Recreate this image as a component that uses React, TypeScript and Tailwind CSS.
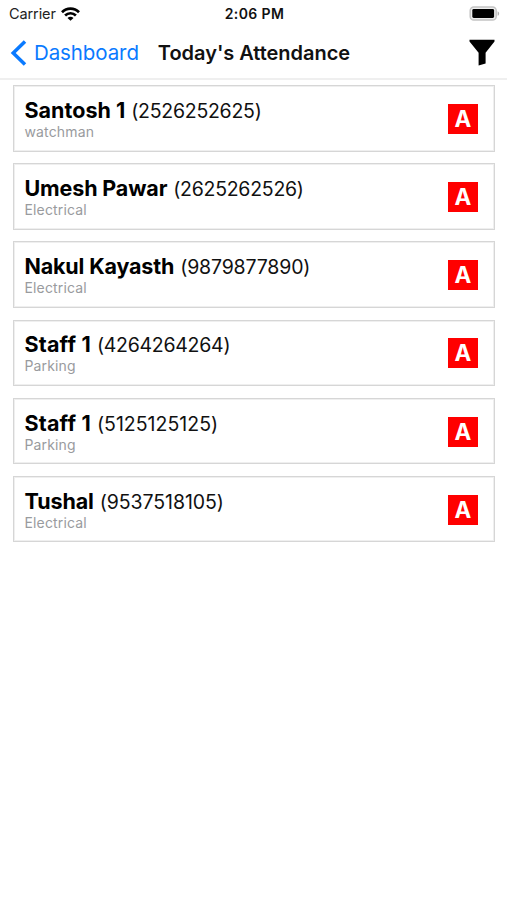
interface Staff {
  name: string
  phone: string
  role: string
  nameClass: string
  phoneClass: string
}

const staff: Staff[] = [
  { name: 'Santosh 1',     phone: '2526252625', role: 'watchman',   nameClass: 'tracking-[0.02px]',  phoneClass: 'tracking-[-0.27px]' },
  { name: 'Umesh Pawar',   phone: '2625262526', role: 'Electrical', nameClass: 'tracking-[-0.14px]', phoneClass: 'tracking-[-0.27px]' },
  { name: 'Nakul Kayasth', phone: '9879877890', role: 'Electrical', nameClass: 'tracking-[-0.16px]', phoneClass: 'tracking-[-0.17px]' },
  { name: 'Staff 1',       phone: '4264264264', role: 'Parking',    nameClass: 'tracking-[0.18px]',  phoneClass: 'tracking-[-0.27px]' },
  { name: 'Staff 1',       phone: '5125125125', role: 'Parking',    nameClass: 'tracking-[0.18px]',  phoneClass: 'tracking-[0.01px]' },
  { name: 'Tushal',        phone: '9537518105', role: 'Electrical', nameClass: 'tracking-[-0.1px]',  phoneClass: 'tracking-[-0.09px]' },
]

function WifiIcon() {
  return (
    <svg width="19" height="14" viewBox="0 0 19 14" fill="none" stroke="#000" strokeWidth="2.7">
      <path d="M1 5.2C5.8 0.4 13.2 0.4 18 5.2" />
      <path d="M4.1 8.5C7.2 5.5 11.8 5.5 14.9 8.5" />
      <path d="M9.5 13.8L6.5 11C8.2 9.4 10.8 9.4 12.5 11Z" fill="#000" stroke="none" />
    </svg>
  )
}

function BatteryIcon() {
  return (
    <svg width="31" height="15" viewBox="0 0 31 15">
      <rect x="1.2" y="0.9" width="26" height="13.2" rx="3.6" fill="#eee" stroke="#c4c4c4" strokeWidth="1.5" />
      <rect x="3.3" y="3" width="21.8" height="9" rx="1.4" fill="#000" />
      <path d="M28.6 5.2C30.6 6 30.6 9 28.6 9.8Z" fill="#b0b0b0" />
    </svg>
  )
}

function StatusBar() {
  return (
    <div className="grid h-[27px] grid-cols-3 items-center pl-[9px] pr-[7px]">
      <div className="flex items-center gap-[5px] text-[14.5px] tracking-[-0.1px] text-[#222]">
        <span>Carrier</span>
        <WifiIcon />
      </div>
      <div className="text-center text-[14px] font-semibold tracking-[0.4px] text-[#111]">2:06 PM</div>
      <div className="flex justify-end">
        <BatteryIcon />
      </div>
    </div>
  )
}

function NavBar() {
  return (
    <header className="flex h-[53px] items-center border-b-2 border-[#efefef] pl-[10px] pr-3">
      <button className="flex items-center gap-[7px] text-[#0a7aff]">
        <svg width="17" height="26" viewBox="0 0 17 26" fill="none" stroke="currentColor" strokeWidth="3.5">
          <path d="M15 1.4L3.2 13L15 24.6" />
        </svg>
        <span className="pt-0.5 text-[20.5px] tracking-[-0.1px]">Dashboard</span>
      </button>
      <h1 className="ml-[19px] text-[20px] font-semibold tracking-[-0.03px] text-[#111]">Today's Attendance</h1>
      <button className="ml-auto">
        <svg width="26" height="27" viewBox="0 0 26 27">
          <path d="M0.5 0.8H25.5V2.4L16.6 13.8V24.6L9.6 26.5V13.8L0.5 2.4Z" fill="#000" />
        </svg>
      </button>
    </header>
  )
}

function StaffCard({ item }: { item: Staff }) {
  return (
    <li className="flex h-[66.5px] items-center justify-between border border-[#d6d6d6] bg-white pl-[10.5px] pr-4 shadow-[inset_0_0_0_1px_#efefef]">
      <div className="pt-px">
        <div className="flex items-baseline gap-[6px] leading-[26px] text-black">
          <span className={`text-[21.5px] font-bold ${item.nameClass}`}>{item.name}</span>
          <span className={`text-[19.5px] text-[#111] ${item.phoneClass}`}>({item.phone})</span>
        </div>
        <div className="-mt-px text-[14px] leading-[18px] tracking-[0.15px] text-[#999b9e]">{item.role}</div>
      </div>
      <span className="mt-px flex size-[30px] items-center justify-center bg-[#ff0000] text-[22.5px] font-bold text-white">A</span>
    </li>
  )
}

export default function App() {
  return (
    <div className="min-h-[900px] w-[507px] bg-white font-['Inter','Liberation_Sans',sans-serif]">
      <StatusBar />
      <NavBar />
      <ul className="flex flex-col gap-[11.7px] pl-[13px] pr-3 pt-[5px]">
        {staff.map((item) => (
          <StaffCard key={item.phone} item={item} />
        ))}
      </ul>
    </div>
  )
}
